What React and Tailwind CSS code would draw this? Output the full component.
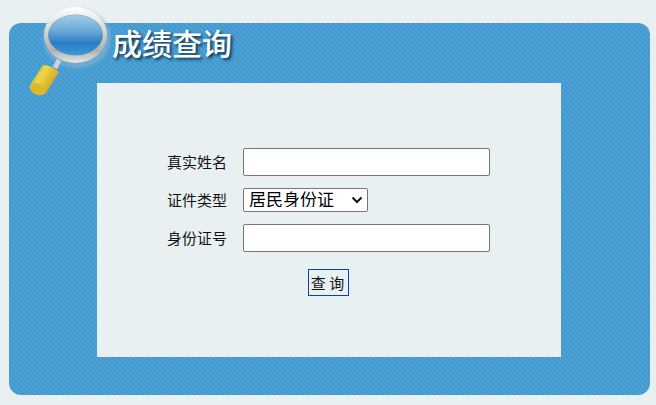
import React from 'react'

const cjk = "font-['Noto_Sans_CJK_SC','Liberation_Sans',sans-serif]"

const Magnifier = () => (
  <svg width="84" height="96" viewBox="0 0 84 96" className="absolute left-[27px] top-[5px]">
    <defs>
      <filter id="soft" x="-20%" y="-20%" width="140%" height="140%">
        <feGaussianBlur stdDeviation="1.6" />
      </filter>
      <linearGradient id="ring" x1="0" y1="0" x2="0" y2="1">
        <stop offset="0%" stopColor="#ffffff" />
        <stop offset="35%" stopColor="#dedede" />
        <stop offset="78%" stopColor="#b0b0b0" />
        <stop offset="100%" stopColor="#e8e8e8" />
      </linearGradient>
      <linearGradient id="glass" x1="0" y1="0" x2="0" y2="1">
        <stop offset="0%" stopColor="#9fcde8" />
        <stop offset="40%" stopColor="#6aa8d8" />
        <stop offset="70%" stopColor="#2a7cc4" />
        <stop offset="100%" stopColor="#3a97da" />
      </linearGradient>
      <linearGradient id="handle" x1="0" y1="0" x2="1" y2="0.6">
        <stop offset="0%" stopColor="#b8981c" />
        <stop offset="45%" stopColor="#f0d64a" />
        <stop offset="100%" stopColor="#c49a18" />
      </linearGradient>
    </defs>
    <ellipse cx="50" cy="33" rx="34" ry="30" fill="#8fb8d0" opacity="0.55" filter="url(#soft)" />
    <path d="M32 55 L28 63" stroke="#d2d2d2" strokeWidth="5" />
    <path d="M16 60 Q24 60 32 67 L19 88 Q14 92 8 88 Q2 85 3 80 Z" fill="url(#handle)" />
    <ellipse cx="10" cy="84" rx="5.5" ry="8" transform="rotate(-58 10 84)" fill="#dcb92a" />
    <ellipse cx="48.5" cy="30" rx="31.5" ry="28" fill="url(#ring)" />
    <ellipse cx="48.5" cy="30" rx="27.5" ry="20.5" fill="#8a99a8" />
    <ellipse cx="48.5" cy="30" rx="27" ry="20" fill="url(#glass)" />
  </svg>
)

const Row = ({ label, children }) => (
  <div className="flex items-center">
    <label className="w-[76px] text-[15px] leading-none text-[#111] -mt-[1px]">{label}</label>
    {children}
  </div>
)

const TextInput = () => (
  <input type="text" className="w-[247px] h-[28px] bg-white border border-[#767676] rounded-[2px]" />
)

export default function App() {
  return (
    <div className={`relative w-[656px] h-[405px] bg-[#e9f0f2] pt-[23px] pl-[9px] overflow-hidden ${cjk}`}>
      <div className="w-[641px] h-[372px] rounded-[12px] bg-[linear-gradient(45deg,#5f9ac4_25%,#25a2e6_25%,#25a2e6_50%,#5f9ac4_50%,#5f9ac4_75%,#25a2e6_75%)] bg-[length:5px_5px]">
        <div className="h-[60px] pl-[103px]">
          <h1 className="text-[30px] leading-[38px] font-medium text-white [text-shadow:2px_2px_3px_#0f3350]">成绩查询</h1>
        </div>
        <div className="ml-[88px] w-[464px] h-[274px] bg-[#e9f0f2] pt-[65px] pl-[70px] flex flex-col">
          <Row label="真实姓名"><TextInput /></Row>
          <div className="mt-[12px]">
            <Row label="证件类型">
              <div className="relative">
                <select className="block w-[125px] h-[24px] pl-[5px] pb-[4px] leading-[20px] bg-white border border-[#767676] rounded-[2px] text-[17px] text-black appearance-none">
                  <option>居民身份证</option>
                </select>
                <svg width="12" height="8" viewBox="0 0 12 8" className="absolute right-[5px] top-[8px] pointer-events-none">
                  <path d="M1.5 1.5 L6 6 L10.5 1.5" fill="none" stroke="#111" strokeWidth="2" />
                </svg>
              </div>
            </Row>
          </div>
          <div className="mt-[12px]">
            <Row label="身份证号"><TextInput /></Row>
          </div>
          <button className="mt-[17px] ml-[141px] w-[41px] h-[27px] pr-[2px] bg-[#e9f0f2] border border-[#0f3fa8] text-[15px] leading-none text-[#111]">查 询</button>
        </div>
      </div>
      <Magnifier />
    </div>
  )
}
